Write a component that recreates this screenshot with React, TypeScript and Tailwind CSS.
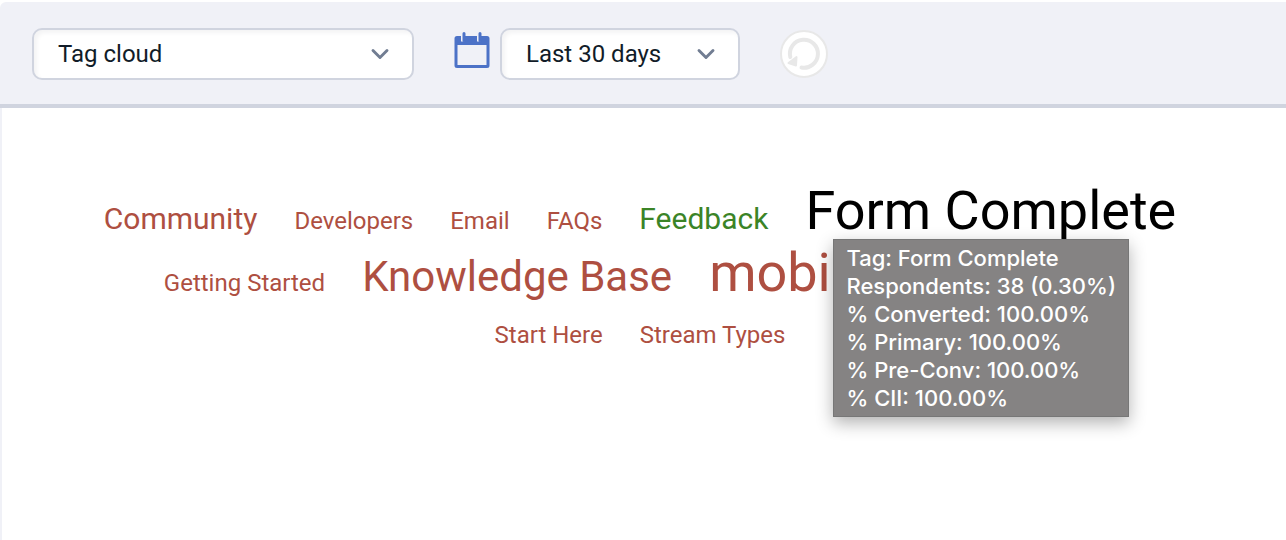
import { ChevronDown } from "lucide-react";

const tags = [
  { name: "Community", className: "text-[30px] text-[#ae4f41]" },
  { name: "Developers", className: "text-2xl text-[#ae4f41]" },
  { name: "Email", className: "text-2xl text-[#ae4f41]" },
  { name: "FAQs", className: "text-2xl text-[#ae4f41]" },
  { name: "Feedback", className: "text-[30px] text-[#3b8427]" },
  { name: "Form Complete", className: "text-[54px] text-black" },
  { name: "Getting Started", className: "text-2xl text-[#ae4f41]" },
  { name: "Knowledge Base", className: "text-[42px] text-[#ae4f41]" },
  { name: "mobile", className: "text-[54px] text-[#ae4f41]" },
  { name: "Onboarding", className: "text-[40px] text-[#ae4f41]" },
  { name: "Start Here", className: "text-2xl text-[#ae4f41]" },
  { name: "Stream Types", className: "text-2xl text-[#ae4f41]" },
];

const details = [
  "Tag: Form Complete",
  "Respondents: 38 (0.30%)",
  "% Converted: 100.00%",
  "% Primary: 100.00%",
  "% Pre-Conv: 100.00%",
  "% CII: 100.00%",
];

function Select({ label, value, className }: { label: string; value: string; className: string }) {
  return (
    <div className={`relative ${className}`}>
      <select
        aria-label={label}
        className="h-[52px] w-full appearance-none rounded-[10px] border-2 border-[#d0d4df] bg-white pl-6 text-2xl text-[#111c28] shadow-[inset_3px_3px_4px_#f4f4f5]"
      >
        <option>{value}</option>
      </select>
      <ChevronDown
        className="pointer-events-none absolute top-3 right-5 size-7 text-[#717d92]"
        strokeWidth={2.5}
      />
    </div>
  );
}

function CalendarIcon() {
  return (
    <svg viewBox="0 0 36 36" className="size-9" aria-hidden="true">
      <path
        fill="#4c72c7"
        fillRule="evenodd"
        d="M3 4h4v5.500h3.500V4H23v5.500h3.500V4H33a2.500 2.500 0 0 1 2.500 2.500v27A2.500 2.500 0 0 1 33 36H3a2.500 2.500 0 0 1-2.500-2.500v-27A2.500 2.500 0 0 1 3 4Zm.5 9v20h29V13Z"
      />
      <path stroke="#4c72c7" strokeWidth="3" strokeLinecap="round" d="M10 1.500v7M26 1.500v7" />
    </svg>
  );
}

function RefreshIcon() {
  return (
    <svg viewBox="0 0 48 48" className="size-12 shrink-0" fill="none" aria-hidden="true">
      <path
        d="M21.500 37.500a14 14 0 1 0-11.200-10.500"
        stroke="#e8e8e8"
        strokeWidth="4"
        strokeLinecap="round"
      />
      <path
        d="m8.500 33 8-6-.5 8.500Z"
        fill="#e8e8e8"
        stroke="#e8e8e8"
        strokeWidth="2"
        strokeLinejoin="round"
      />
    </svg>
  );
}

export default function App() {
  return (
    <div className="flex min-h-screen flex-col bg-white pt-[2px] font-[Roboto,sans-serif]">
      <header className="flex items-center rounded-tl-md border-b-4 border-[#d0d4df] bg-[#f0f1f7] px-8 pt-[26px] pb-6">
        <Select label="Report" value="Tag cloud" className="w-[382px]" />
        <div className="ml-10 flex items-start gap-[10px]">
          <div className="pt-1">
            <CalendarIcon />
          </div>
          <Select label="Date range" value="Last 30 days" className="w-60" />
        </div>
        <button
          aria-label="Refresh"
          className="ml-10 flex size-12 items-center justify-center rounded-full border-2 border-[#e8e8e8] bg-white"
        >
          <RefreshIcon />
        </button>
      </header>
      <main className="grow border-l-2 border-[#f0f1f7] pt-[77px] pr-[104px] pb-20 pl-24">
        <ul className="flex flex-wrap items-baseline justify-center gap-x-[37px]">
          {tags.map((tag) => (
            <li key={tag.name} className={`relative leading-[52px] ${tag.className}`}>
              <a href="#">{tag.name}</a>
              {tag.name === "Form Complete" && (
                <div
                  role="tooltip"
                  className="absolute top-[54px] left-7 z-10 border border-[#777] bg-[#858383] px-3 py-1 font-[Inter,sans-serif] text-[22px] leading-7 font-medium whitespace-nowrap text-white shadow-[0_6px_16px_rgba(0,0,0,0.3)]"
                >
                  {details.map((line) => (
                    <p key={line}>{line}</p>
                  ))}
                </div>
              )}
            </li>
          ))}
        </ul>
      </main>
    </div>
  );
}
